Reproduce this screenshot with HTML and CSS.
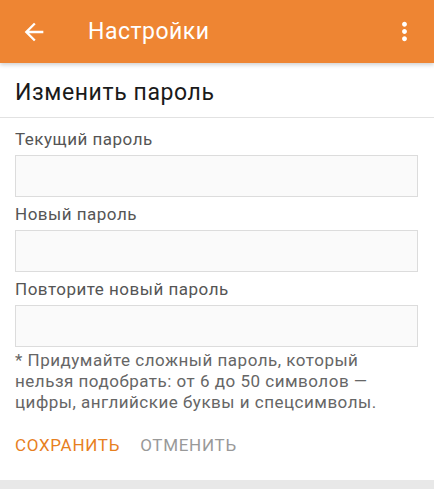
FILE: index.html
```html
<!DOCTYPE html>
<html lang="ru">
<head>
    <meta charset="UTF-8">
    <meta name="viewport" content="width=device-width, initial-scale=1.0">
    <title>Настройки</title>
    <link rel="stylesheet" href="styles.css">
</head>
<body>
    <div class="toolbar">
        <button class="tool-btn back" aria-label="Назад">
            <svg width="28" height="28" viewBox="0 0 24 24"><path d="M20 11H7.83l5.59-5.59L12 4l-8 8 8 8 1.41-1.41L7.83 13H20v-2z" fill="#fff"/></svg>
        </button>
        <div class="toolbar-title">Настройки</div>
        <button class="tool-btn menu" aria-label="Меню">
            <svg width="29" height="29" viewBox="0 0 24 24"><path d="M12 8c1.1 0 2-.9 2-2s-.9-2-2-2-2 .9-2 2 .9 2 2 2zm0 2c-1.1 0-2 .9-2 2s.9 2 2 2 2-.9 2-2-.9-2-2-2zm0 6c-1.1 0-2 .9-2 2s.9 2 2 2 2-.9 2-2-.9-2-2-2z" fill="#fff"/></svg>
        </button>
    </div>

    <div class="content">
        <h1 class="section-title">Изменить пароль</h1>

        <form class="form">
            <label class="field-label" for="current">Текущий пароль</label>
            <input class="field" id="current" type="password">

            <label class="field-label" for="newpass">Новый пароль</label>
            <input class="field" id="newpass" type="password">

            <label class="field-label" for="repeat">Повторите новый пароль</label>
            <input class="field last" id="repeat" type="password">

            <p class="hint">* Придумайте сложный пароль, который нельзя подобрать: от 6 до 50 символов — цифры, английские буквы и спецсимволы.</p>

            <div class="actions">
                <button type="button" class="action save">Сохранить</button>
                <button type="button" class="action cancel">Отменить</button>
            </div>
        </form>
    </div>

    <div class="bottom-band"></div>
</body>
</html>
```

FILE: styles.css
```css
body {
    margin: 0;
    font-family: Roboto, "Noto Sans", Arial, sans-serif;
    background-color: #fff;
    color: #222;
}
.toolbar {
    position: relative;
    z-index: 1;
    height: 63px;
    background-color: #ee8533;
    display: flex;
    align-items: center;
    box-shadow: 0 2px 4px rgba(0,0,0,0.18);
}
.tool-btn {
    background: none;
    border: none;
    padding: 0;
    display: flex;
    align-items: center;
    justify-content: center;
    cursor: pointer;
}
.tool-btn.back {
    margin-left: 20px;
}
.tool-btn.menu {
    margin-left: auto;
    margin-right: 15px;
}
.toolbar-title {
    margin-left: 40px;
    color: #fff;
    font-size: 23px;
    letter-spacing: 0.5px;
    line-height: 27px;
}
.section-title {
    margin: 0;
    padding: 16px 15px 11px;
    font-size: 23px;
    font-weight: normal;
    letter-spacing: 0.6px;
    line-height: 27px;
    color: #1a1a1a;
    border-bottom: 1px solid #e2e2e2;
}
.form {
    padding: 11px 16px 0 15px;
    display: flex;
    flex-direction: column;
}
.field-label {
    font-size: 17px;
    letter-spacing: 0.5px;
    line-height: 20px;
    color: #555;
    margin-bottom: 6px;
}
.field {
    height: 42px;
    box-sizing: border-box;
    border: 1px solid #dcdcdc;
    background-color: #fafafa;
    margin: 0 0 7px;
    font-size: 16px;
    padding: 0 8px;
    outline: none;
}
.field.last {
    margin-bottom: 3px;
}
.hint {
    margin: 0;
    max-width: 385px;
    font-size: 17px;
    letter-spacing: 0.5px;
    line-height: 21px;
    color: #666;
}
.actions {
    display: flex;
    gap: 20px;
    margin-top: 22px;
    height: 45px;
}
.action {
    background: none;
    border: none;
    padding: 0;
    height: 20px;
    font-family: inherit;
    font-size: 17px;
    letter-spacing: 0.7px;
    line-height: 20px;
    text-transform: uppercase;
    cursor: pointer;
}
.action.save {
    color: #e7801f;
}
.action.cancel {
    color: #999;
}
.bottom-band {
    height: 9px;
    background-color: #e8e8e8;
}
```
